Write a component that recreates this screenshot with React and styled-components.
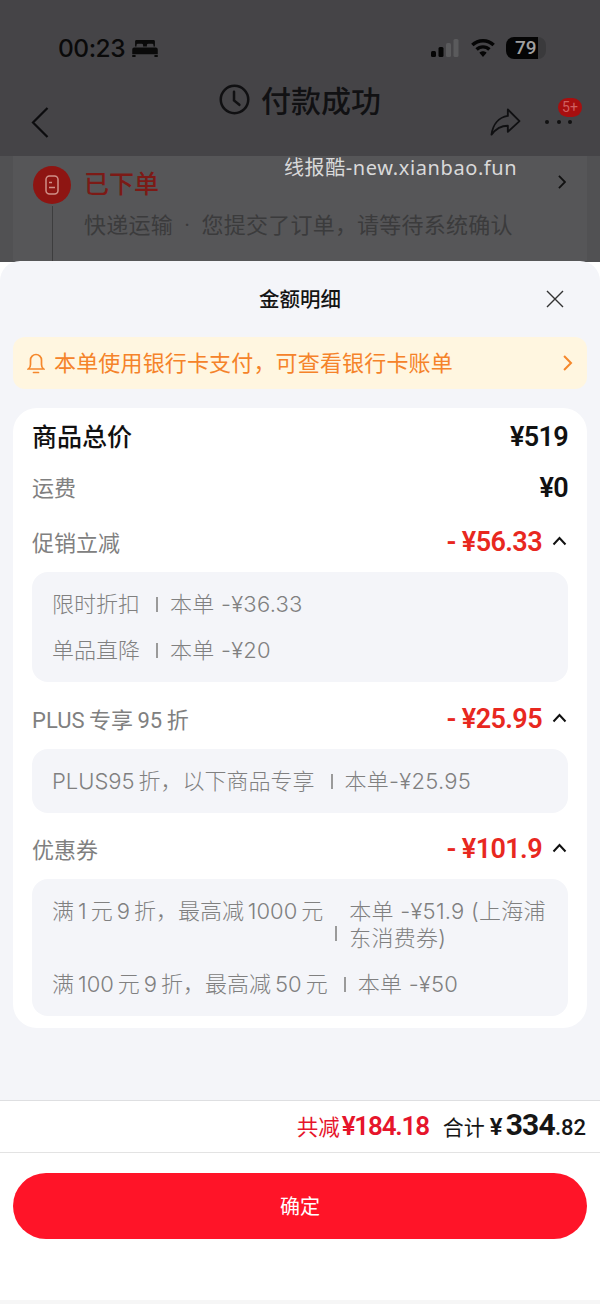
import React from "react";
import styled, { createGlobalStyle } from "styled-components";

const GlobalStyle = createGlobalStyle`
  html, body {
    margin: 0;
    padding: 0;
    background: #fff;
  }
  * {
    box-sizing: border-box;
  }
`;

const FONT = `Roboto, "Noto Sans CJK SC", sans-serif`;

const SECTIONS = [
  {
    name: "促销立减",
    amount: "- ¥56.33",
    rows: [
      { label: "限时折扣", value: "本单 -¥36.33" },
      { label: "单品直降", value: "本单 -¥20" },
    ],
  },
  {
    name: "PLUS\u2009专享\u200995\u2009折",
    amount: "- ¥25.95",
    rows: [{ label: "PLUS95\u2009折，以下商品专享", value: "本单-¥25.95" }],
  },
  {
    name: "优惠券",
    amount: "- ¥101.9",
    rows: [
      {
        label: "满\u20091\u2009元\u20099\u2009折，最高减\u20091000\u2009元",
        value: "本单 -¥51.9 (上海浦东消费券)",
        tight: true,
      },
      { label: "满\u2009100\u2009元\u20099\u2009折，最高减\u200950\u2009元", value: "本单 -¥50" },
    ],
  },
];

const App = () => {
  return (
    <Page>
      <GlobalStyle />
      <Backdrop>
        <Watermark>线报酷-new.xianbao.fun</Watermark>
        <Header>
          <StatusBar>
            <StatusLeft>
              <Clock>00:23</Clock>
              <BedIcon />
            </StatusLeft>
            <StatusRight>
              <SignalIcon />
              <WifiIcon />
              <Battery>
                <BatteryText>79</BatteryText>
              </Battery>
            </StatusRight>
          </StatusBar>
          <NavBar>
            <BackIcon />
            <NavTitle>
              <ClockIcon />
              付款成功
            </NavTitle>
            <NavActions>
              <ShareIcon />
              <MoreButton>
                <Dots>
                  <i />
                  <i />
                  <i />
                </Dots>
                <Badge>5+</Badge>
              </MoreButton>
            </NavActions>
          </NavBar>
        </Header>
        <OrderArea>
          <OrderCard>
            <StepRail>
              <StepDot>
                <DocIcon />
              </StepDot>
              <StepLine />
            </StepRail>
            <StepBody>
              <StepHead>
                <StepTitle>已下单</StepTitle>
                <Chevron size={14} color="#111" />
              </StepHead>
              <StepText>快递运输{"\u00a0\u00a0"}·{"\u00a0\u00a0"}您提交了订单，请等待系统确认</StepText>
            </StepBody>
          </OrderCard>
        </OrderArea>
      </Backdrop>

      <Sheet>
        <SheetHead>
          金额明细
          <CloseButton>
            <CloseIcon />
          </CloseButton>
        </SheetHead>
        <Notice>
          <BellIcon />
          <NoticeText>本单使用银行卡支付，可查看银行卡账单</NoticeText>
          <Chevron size={16} color="#f5882c" />
        </Notice>
        <Card>
          <TotalRow>
            <TotalLabel>商品总价</TotalLabel>
            <TotalValue>¥519</TotalValue>
          </TotalRow>
          <FeeRow>
            <RowLabel>运费</RowLabel>
            <TotalValue>¥0</TotalValue>
          </FeeRow>
          {SECTIONS.map((section) => (
            <Section key={section.name}>
              <SectionHead>
                <RowLabel>{section.name}</RowLabel>
                <AmountWrap>
                  <Amount>{section.amount}</Amount>
                  <CaretUp />
                </AmountWrap>
              </SectionHead>
              <DetailBox>
                {section.rows.map((row) => (
                  <DetailRow key={row.label}>
                    <DetailLabel $tight={row.tight}>{row.label}</DetailLabel>
                    <DetailBar $tight={row.tight} />
                    <DetailValue>{row.value}</DetailValue>
                  </DetailRow>
                ))}
              </DetailBox>
            </Section>
          ))}
        </Card>
        <Footer>
          <Summary>
            <Saved>
              共减<b>¥184.18</b>
            </Saved>
            <Sum>
              合计
              <SumYen>¥</SumYen>
              <SumBig>334</SumBig>
              <SumCents>.82</SumCents>
            </Sum>
          </Summary>
          <ButtonWrap>
            <Confirm>确定</Confirm>
          </ButtonWrap>
        </Footer>
      </Sheet>
    </Page>
  );
};

const BedIcon = () => (
  <svg width="26" height="17" viewBox="0 0 27 18" fill="#0a0a0a">
    <path d="M3 1.500A1.500 1.500 0 0 1 4.500 0h18A1.500 1.500 0 0 1 24 1.500V7h-1.500V5.500a1.500 1.500 0 0 0-1.500-1.500h-4a1.500 1.500 0 0 0-1.500 1.500V7h-4V5.500A1.500 1.500 0 0 0 10 4H6a1.500 1.500 0 0 0-1.500 1.500V7H3z" />
    <path d="M2 8h23a2 2 0 0 1 2 2v5H0v-5a2 2 0 0 1 2-2zM0 16h3.500v2H0zM23.500 16H27v2h-3.500z" />
  </svg>
);

const SignalIcon = () => (
  <svg width="28" height="18" viewBox="0 0 28 18">
    <rect x="0" y="12" width="5" height="6" rx="1.500" fill="#050505" />
    <rect x="7.500" y="8" width="5" height="10" rx="1.500" fill="#050505" />
    <rect x="15" y="4" width="5" height="14" rx="1.500" fill="#5a5a5c" />
    <rect x="22.500" y="0" width="5" height="18" rx="1.500" fill="#5a5a5c" />
  </svg>
);

const WifiIcon = () => (
  <svg width="24" height="18" viewBox="0 0 25 19" fill="#050505">
    <path d="M12.500 0C17.300 0 21.700 1.900 25 5l-2.500 2.700A14.600 14.600 0 0 0 12.500 3.700 14.600 14.600 0 0 0 2.500 7.700L0 5C3.300 1.900 7.700 0 12.500 0z" />
    <path d="M12.500 6.500c3.100 0 5.900 1.200 8 3.200L18 12.300a8 8 0 0 0-11 0L4.500 9.700c2.100-2 4.900-3.200 8-3.200z" />
    <path d="M12.500 13c1.500 0 2.800.6 3.800 1.500L12.500 19l-3.800-4.500c1-.9 2.300-1.500 3.800-1.500z" />
  </svg>
);

const BackIcon = () => (
  <BackSvg width="18" height="31" viewBox="0 0 18 31" fill="none" stroke="#0c0c0e" strokeWidth="2.200">
    <path d="M16.500 1 2 15.500 16.500 30" />
  </BackSvg>
);

const ClockIcon = () => (
  <svg width="31" height="31" viewBox="0 0 32 32" fill="none" stroke="#101012" strokeWidth="2.600">
    <circle cx="16" cy="16" r="14.200" />
    <path d="M15.500 8v9l5.500 4.500" strokeLinecap="round" />
  </svg>
);

const ShareIcon = () => (
  <svg width="31" height="28" viewBox="0 0 33 30" fill="none" stroke="#101012" strokeWidth="2" strokeLinejoin="round">
    <path d="M19 1.500 31.500 14 19 25.500v-6.500C11 19 6 22.500 1.500 28.500 3 18 9 10 19 8.500z" />
  </svg>
);

const DocIcon = () => (
  <svg width="14" height="20" viewBox="0 0 14 20" fill="none" stroke="#d09088" strokeWidth="1.500">
    <rect x="1" y="1" width="12" height="18" rx="3.500" />
    <path d="M4 7.500h3M4 12.500h6" />
  </svg>
);

const Chevron = ({ size, color }) => (
  <svg width={size * 0.6} height={size} viewBox="0 0 9 15" fill="none" stroke={color} strokeWidth="1.900">
    <path d="M1 1l6.500 6.500L1 14" />
  </svg>
);

const CloseIcon = () => (
  <svg width="18" height="18" viewBox="0 0 18 18" fill="none" stroke="#333" strokeWidth="1.400">
    <path d="M1 1l16 16M17 1 1 17" />
  </svg>
);

const BellIcon = () => (
  <svg width="18" height="21" viewBox="0 0 18 21" fill="none" stroke="#f5882c" strokeWidth="1.700" strokeLinecap="round">
    <path d="M1.500 16h15c-1.300-1-2-2.500-2-4.500V7a5.500 5.500 0 0 0-11 0v4.500c0 2-.7 3.500-2 4.500z" />
    <path d="M6.500 19.500h5" />
  </svg>
);

const CaretUp = () => (
  <CaretSvg width="15" height="10" viewBox="0 0 15 10" fill="none" stroke="#111" strokeWidth="2">
    <path d="M1.500 8.500 7.500 2l6 6.500" />
  </CaretSvg>
);

const Page = styled.div`
  width: 600px;
  height: 1304px;
  display: flex;
  flex-direction: column;
  overflow: hidden;
  background: #fff;
  font-family: ${FONT};
`;

const Backdrop = styled.div`
  position: relative;
  height: 262px;
  margin-bottom: -1px;
  background: #515153;
  overflow: hidden;
`;

const Watermark = styled.div`
  position: absolute;
  top: 154px;
  left: 284px;
  z-index: 2;
  font-family: "Noto Sans", "Noto Sans CJK SC", sans-serif;
  font-size: 20px;
  line-height: 28px;
  letter-spacing: 0.6px;
  color: rgba(255, 255, 255, 0.78);
  white-space: nowrap;
`;

const Header = styled.div`
  height: 156px;
  padding-top: 34px;
  background: #454447;
`;

const StatusBar = styled.div`
  display: flex;
  justify-content: space-between;
  align-items: center;
  height: 28px;
  padding: 0 54px 0 58px;
`;

const StatusLeft = styled.div`
  display: flex;
  align-items: center;
  gap: 7px;
`;

const Clock = styled.span`
  font-family: Inter, sans-serif;
  font-size: 24.5px;
  font-weight: 500;
  letter-spacing: -0.5px;
  color: #0a0a0a;
`;

const StatusRight = styled.div`
  display: flex;
  align-items: center;
  gap: 12px;
`;

const Battery = styled.div`
  width: 40px;
  height: 22px;
  margin-left: -1px;
  padding-left: 9px;
  border-radius: 8px;
  background: linear-gradient(90deg, #050505 79%, #3a3a3c 79%);
`;

const BatteryText = styled.span`
  display: block;
  font-size: 19px;
  line-height: 22px;
  font-weight: 500;
  color: #a0a0a0;
`;

const NavBar = styled.div`
  display: grid;
  grid-template-columns: 1fr auto 1fr;
  align-items: start;
  padding: 17px 28px 0;
  height: 94px;
`;

const BackSvg = styled.svg`
  margin: 28px 0 0 3px;
`;

const NavTitle = styled.div`
  display: flex;
  align-items: center;
  gap: 11px;
  margin-top: 2px;
  font-family: "Noto Sans CJK SC", sans-serif;
  font-size: 30px;
  line-height: 36px;
  font-weight: 500;
  color: #111113;
`;

const NavActions = styled.div`
  display: flex;
  justify-content: flex-end;
  align-items: center;
  gap: 24px;
  margin-top: 28px;
`;

const MoreButton = styled.div`
  position: relative;
  display: flex;
  align-items: center;
  height: 30px;
`;

const Dots = styled.div`
  display: flex;
  gap: 7.5px;

  i {
    width: 4px;
    height: 4px;
    border-radius: 50%;
    background: #111;
  }
`;

const Badge = styled.span`
  position: absolute;
  top: -9px;
  right: -10px;
  width: 24px;
  height: 19px;
  border-radius: 10px;
  background: #a80f0f;
  color: #d06060;
  font-size: 14px;
  line-height: 19px;
  text-align: center;
`;

const OrderArea = styled.div`
  padding: 0 13px;
`;

const OrderCard = styled.div`
  display: flex;
  gap: 13px;
  height: 105px;
  padding: 10px 21px 0 20px;
  background: #565658;
`;

const StepRail = styled.div`
  display: flex;
  flex-direction: column;
  align-items: center;
  width: 38px;
`;

const StepDot = styled.div`
  display: flex;
  align-items: center;
  justify-content: center;
  width: 38px;
  height: 38px;
  flex: none;
  border-radius: 50%;
  background: #8e1512;
`;

const StepLine = styled.div`
  flex: 1;
  width: 1px;
  margin-top: 2px;
  background: #3d3d3e;
`;

const StepBody = styled.div`
  flex: 1;
`;

const StepHead = styled.div`
  display: flex;
  justify-content: space-between;
  align-items: center;
  height: 32px;
`;

const StepTitle = styled.span`
  font-size: 25px;
  font-weight: 500;
  color: #7c1a16;
`;

const StepText = styled.div`
  margin-top: 12px;
  font-size: 22px;
  line-height: 32px;
  letter-spacing: 0.22px;
  color: #3b3b3c;
  white-space: nowrap;
`;

const Sheet = styled.div`
  position: relative;
  flex: 1;
  display: flex;
  flex-direction: column;
  padding-top: 20px;
  border-radius: 20px 20px 0 0;
  background: #f4f5f9;
`;

const SheetHead = styled.div`
  position: relative;
  height: 36px;
  font-family: "Noto Sans CJK SC", sans-serif;
  font-size: 20.5px;
  font-weight: 500;
  line-height: 34px;
  text-align: center;
  color: #141414;
`;

const CloseButton = styled.span`
  position: absolute;
  top: 9px;
  right: 36px;
  display: flex;
`;

const Notice = styled.div`
  display: flex;
  align-items: center;
  height: 52px;
  margin: 20px 13px 0;
  padding: 0 14px;
  border-radius: 12px;
  background: #fff6e0;
`;

const NoticeText = styled.span`
  flex: 1;
  margin-left: 9px;
  padding-bottom: 4px;
  font-size: 22px;
  letter-spacing: 0.16px;
  color: #f5832a;
`;

const Card = styled.div`
  margin: 19px 13px 0;
  padding: 8px 19px 12px;
  border-radius: 24px;
  background: #fff;
`;

const TotalRow = styled.div`
  display: flex;
  justify-content: space-between;
  align-items: center;
  height: 42px;
`;

const TotalLabel = styled.span`
  padding-bottom: 4px;
  font-size: 25px;
  font-weight: 500;
  color: #111;
`;

const TotalValue = styled.span`
  font-size: 27px;
  font-weight: 600;
  letter-spacing: -0.7px;
  color: #111;
`;

const FeeRow = styled(TotalRow)`
  margin-top: 9px;
`;

const RowLabel = styled.span`
  padding-bottom: 4px;
  font-size: 22px;
  color: #808080;
`;

const Section = styled.div`
  margin-top: 16px;

  & + & {
    margin-top: 19.5px;
  }
`;

const SectionHead = styled.div`
  display: flex;
  justify-content: space-between;
  align-items: center;
  height: 36px;
`;

const AmountWrap = styled.div`
  display: flex;
  align-items: center;
  gap: 10px;
  margin-right: 1px;
`;

const Amount = styled.span`
  padding-bottom: 2px;
  font-size: 27px;
  font-weight: 600;
  letter-spacing: -0.6px;
  color: #e8281f;
`;

const CaretSvg = styled.svg`
  margin-top: -4px;
`;

const DetailBox = styled.div`
  display: flex;
  flex-direction: column;
  gap: 19px;
  margin-top: 11px;
  padding: 19px 20px 18px;
  border-radius: 16px;
  background: #f4f5f9;
`;

const DetailRow = styled.div`
  display: flex;
  align-items: center;
  font-family: Inter, "Noto Sans CJK SC", sans-serif;
  font-size: 22px;
  font-weight: 300;
  line-height: 27px;
  color: #808080;
`;

const DetailLabel = styled.span`
  flex: none;
  align-self: ${(props) => (props.$tight ? "flex-start" : "center")};
`;

const DetailBar = styled.i`
  flex: none;
  width: 2px;
  height: 15px;
  margin: ${(props) => (props.$tight ? "16px 12px 0" : "0 12px 0 16px")};
  background: #9a9a9a;
`;

const DetailValue = styled.span`
  letter-spacing: 0.25px;
`;

const Footer = styled.div`
  margin-top: auto;
  height: 204px;
  border-top: 1px solid #dedfe1;
  border-bottom: 4px solid #f6f6f6;
  background: #fff;
`;

const Summary = styled.div`
  display: flex;
  justify-content: flex-end;
  align-items: baseline;
  gap: 14px;
  height: 52px;
  padding: 6px 14px 0 0;
  border-bottom: 1px solid #e3e3e3;
`;

const Saved = styled.span`
  font-size: 21.5px;
  color: #e6152b;

  b {
    margin-left: 2px;
    font-size: 26px;
    font-weight: 600;
    letter-spacing: -1.2px;
  }
`;

const Sum = styled.span`
  font-size: 21px;
  color: #161616;
`;

const SumYen = styled.span`
  margin-left: 5px;
  font-size: 24px;
  font-weight: 600;
`;

const SumBig = styled.span`
  margin-left: 3px;
  font-size: 30px;
  font-weight: 700;
  letter-spacing: -0.8px;
`;

const SumCents = styled.span`
  font-size: 22px;
  font-weight: 500;
`;

const ButtonWrap = styled.div`
  padding: 20px 13px 0;
`;

const Confirm = styled.div`
  height: 66px;
  border-radius: 33px;
  background: #ff1428;
  color: #fff;
  font-family: "Noto Sans CJK SC", sans-serif;
  font-size: 20px;
  font-weight: 400;
  line-height: 66px;
  text-align: center;
`;

export default App;
